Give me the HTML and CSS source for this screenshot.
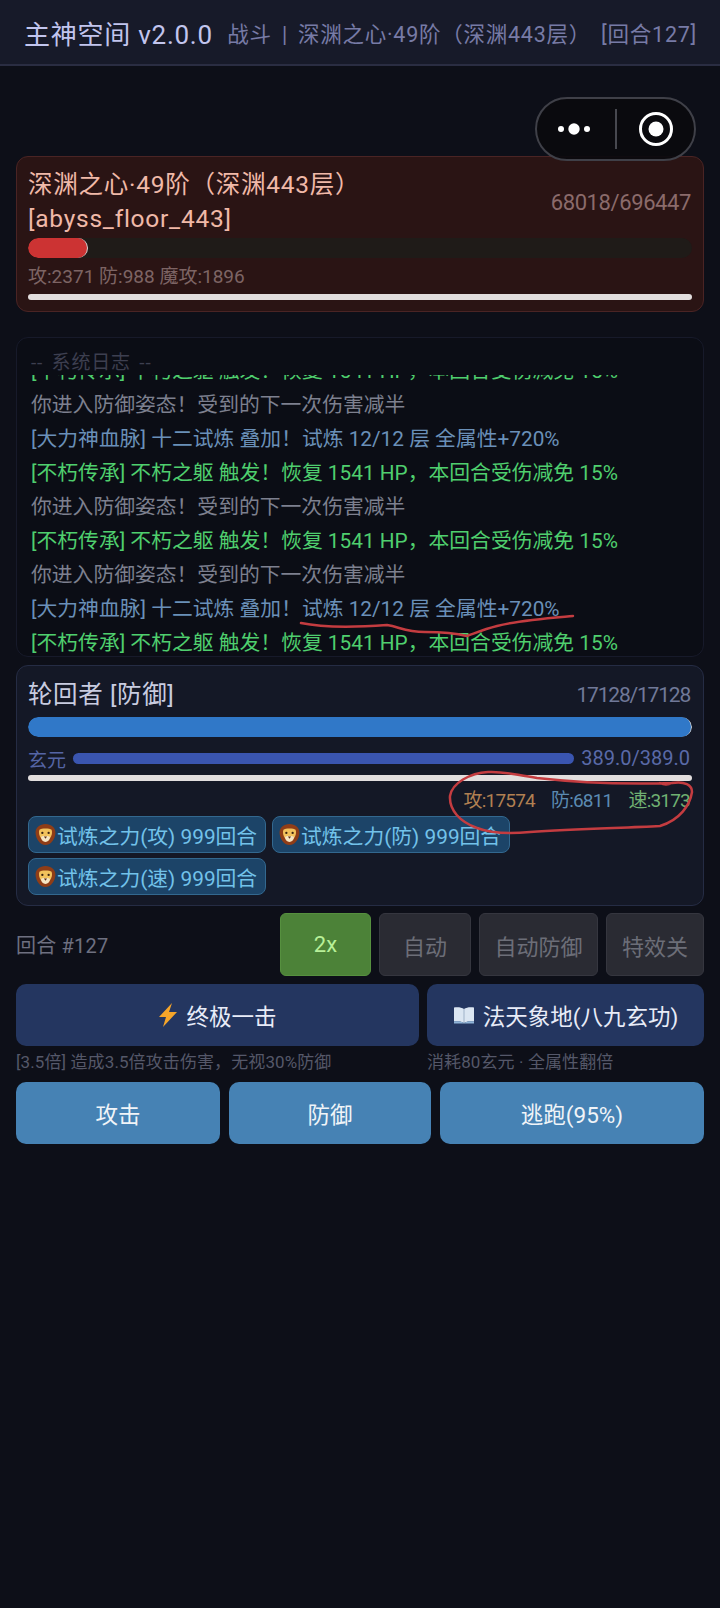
FILE: index.html
```html
<!DOCTYPE html>
<html lang="zh-CN">
<head>
  <meta charset="UTF-8" />
  <meta name="viewport" content="width=device-width, initial-scale=1.0"/>
  <title>主神空间</title>
  <link rel="stylesheet" href="styles.css">
</head>
<body>
  <svg class="icon-defs" width="0" height="0">
    <symbol id="lion" viewBox="0 0 20 22">
      <path d="M10 1C4.500 1 .3 4.600 .5 9.500c.2 5.200 4.100 11.500 9.500 11.500s9.300-6.300 9.500-11.500C19.700 4.600 15.500 1 10 1z" fill="#8f3d17"/>
      <path d="M4.200 6.500C6 4.800 14 4.800 15.800 6.500c1 2.500.3 6-1.800 8.500H6C3.900 12.500 3.200 9 4.200 6.500z" fill="#f3c25c"/>
      <path d="M5.800 13.500c1-1.300 7.400-1.300 8.400 0 .3 2.500-2 4.700-4.200 4.700s-4.500-2.200-4.200-4.700z" fill="#f6e6c4"/>
      <circle cx="7" cy="9.500" r="1.100" fill="#3a2210"/>
      <circle cx="13" cy="9.500" r="1.100" fill="#3a2210"/>
      <path d="M8.500 13h3L10 15z" fill="#5a2a12"/>
    </symbol>
  </svg>

  <header class="topbar">
    <span class="app-title">主神空间 v2.0.0</span>
    <span class="app-status">战斗 | 深渊之心·49阶（深渊443层） [回合127]</span>
  </header>

  <div class="capsule">
    <svg class="capsule-dots" width="36" height="14" viewBox="0 0 36 14">
      <circle cx="5" cy="7" r="3" fill="#fff"/>
      <circle cx="18" cy="7" r="5.700" fill="#fff"/>
      <circle cx="31" cy="7" r="3" fill="#fff"/>
    </svg>
    <span class="capsule-line"></span>
    <svg class="capsule-target" width="34" height="34" viewBox="0 0 34 34">
      <circle cx="17" cy="17" r="15.500" fill="none" stroke="#fff" stroke-width="3"/>
      <circle cx="17" cy="17" r="7.500" fill="#fff"/>
    </svg>
  </div>

  <main class="battle">
    <section class="card boss-card">
      <div class="card-head">
        <div class="boss-name">深渊之心·49阶（深渊443层）<br>[abyss_floor_443]</div>
        <div class="boss-hp">68018/696447</div>
      </div>
      <div class="bar boss-bar"><div class="bar-fill boss-fill" style="width: 9.1%"></div></div>
      <div class="boss-stats">攻:2371 防:988 魔攻:1896</div>
      <div class="white-bar"></div>
    </section>

    <section class="log">
      <div class="log-title">-- 系统日志 --</div>
      <div class="log-body">
        <div class="log-line green">[不朽传承] 不朽之躯 触发！恢复 1541 HP，本回合受伤减免 15%</div>
        <div class="log-line grey">你进入防御姿态！受到的下一次伤害减半</div>
        <div class="log-line blue">[大力神血脉] 十二试炼 叠加！试炼 12/12 层 全属性+720%</div>
        <div class="log-line green">[不朽传承] 不朽之躯 触发！恢复 1541 HP，本回合受伤减免 15%</div>
        <div class="log-line grey">你进入防御姿态！受到的下一次伤害减半</div>
        <div class="log-line green">[不朽传承] 不朽之躯 触发！恢复 1541 HP，本回合受伤减免 15%</div>
        <div class="log-line grey">你进入防御姿态！受到的下一次伤害减半</div>
        <div class="log-line blue">[大力神血脉] 十二试炼 叠加！试炼 12/12 层 全属性+720%</div>
        <div class="log-line green">[不朽传承] 不朽之躯 触发！恢复 1541 HP，本回合受伤减免 15%</div>
      </div>
    </section>

    <section class="card player-card">
      <div class="card-head">
        <div class="player-name">轮回者 [防御]</div>
        <div class="player-hp">17128/17128</div>
      </div>
      <div class="bar player-bar"><div class="bar-fill player-fill" style="width: 100%"></div></div>
      <div class="mana-row">
        <span class="mana-label">玄元</span>
        <div class="mana-bar"></div>
        <span class="mana-value">389.0/389.0</span>
      </div>
      <div class="white-bar"></div>
      <div class="player-stats">
        <span class="stat-atk">攻:17574</span>
        <span class="stat-def">防:6811</span>
        <span class="stat-spd">速:3173</span>
      </div>
      <div class="buffs">
        <span class="buff"><svg class="buff-icon" width="21" height="23"><use href="#lion"/></svg>试炼之力(攻) 999回合</span>
        <span class="buff"><svg class="buff-icon" width="21" height="23"><use href="#lion"/></svg>试炼之力(防) 999回合</span>
        <span class="buff"><svg class="buff-icon" width="21" height="23"><use href="#lion"/></svg>试炼之力(速) 999回合</span>
      </div>
    </section>

    <div class="controls">
      <span class="turn">回合 #127</span>
      <button class="toggle toggle-on toggle-speed">2x</button>
      <button class="toggle toggle-auto">自动</button>
      <button class="toggle toggle-guard">自动防御</button>
      <button class="toggle toggle-fx">特效关</button>
    </div>

    <div class="skills">
      <div class="skill">
        <button class="skill-btn">
          <svg width="20" height="24" viewBox="0 0 20 24"><path d="M14 0L1 14h7l-3 10L19 9h-8z" fill="#f5a52a"/></svg>
          终极一击
        </button>
        <p class="skill-desc">[3.5倍] 造成3.5倍攻击伤害，无视30%防御</p>
      </div>
      <div class="skill">
        <button class="skill-btn">
          <svg width="22" height="18" viewBox="0 0 22 18">
            <path d="M11 3C8.500 1 4 1 1 1.500V15.500C4 15 8.500 15 11 17 13.500 15 18 15 21 15.500V1.500C18 1 13.500 1 11 3z" fill="#dbe6f2"/>
            <path d="M11 3V17" stroke="#9fb2c8" stroke-width="1"/>
            <path d="M1 15.500C4 15 8.500 15 11 17 13.500 15 18 15 21 15.500V17.500H1z" fill="#8fb4d8"/>
          </svg>
          法天象地(八九玄功)
        </button>
        <p class="skill-desc">消耗80玄元 · 全属性翻倍</p>
      </div>
    </div>

    <div class="actions">
      <button class="action-btn">攻击</button>
      <button class="action-btn">防御</button>
      <button class="action-btn">逃跑(95%)</button>
    </div>
  </main>

  <!-- red pen marks drawn over the screenshot -->
  <svg class="pen-marks" width="720" height="1608" viewBox="0 0 720 1608">
    <path d="M301 623C320 627 345 628 387 625C400 627 405 632 425 632C440 632 455 633 467 636C478 632 485 629 497 626C520 620 550 618 573 616"/>
    <path d="M673 783C640 784 590 784 537 778C515 775 505 771 488 772C470 773 452 783 450 796C449 810 460 822 477 828C490 833 510 834 530 832C575 829 620 828 660 826C680 820 690 805 692 792C692 785 685 781 672 783C668 785 664 785 660 783"/>
  </svg>
</body>
</html>
```

FILE: styles.css
```css
* { margin: 0; padding: 0; box-sizing: border-box; }
body {
  position: relative;
  width: 720px;
  height: 1608px;
  overflow: hidden;
  background: #0d0f18;
  font-family: "Roboto", "Noto Sans CJK SC", sans-serif;
}
button { font-family: inherit; border: none; }
.icon-defs { position: absolute; }

.topbar {
  display: flex;
  align-items: center;
  justify-content: space-between;
  height: 66px;
  padding: 0 23px 0 24px;
  background: #171a29;
  border-bottom: 2px solid #2a2d42;
  white-space: nowrap;
}
.app-title { font-size: 26px; letter-spacing: 0.75px; color: #c2c5ee; }
.app-status { font-size: 21.500px; letter-spacing: 0.75px; word-spacing: 4px; color: #777ba6; }

.capsule {
  position: absolute;
  top: 97px;
  left: 535px;
  z-index: 2;
  display: flex;
  align-items: center;
  width: 161px;
  height: 64px;
  border: 2px solid #3f4048;
  border-radius: 32px;
  background: rgba(10, 10, 14, 0.92);
}
.capsule-dots { margin-left: 19px; }
.capsule-line { width: 2px; height: 40px; margin-left: 23px; background: #47484f; }
.capsule-target { margin-left: 22px; }

.battle { padding: 90px 16px 0; }

.card { border-radius: 12px; border: 1px solid; }
.card-head { display: flex; align-items: center; justify-content: space-between; }
.bar { height: 20px; border-radius: 10px; overflow: hidden; }
.bar-fill { height: 100%; border-radius: 10px; border-right: 1px solid #d8d8d8; }
.white-bar { height: 6px; border-radius: 3px; background: #e2dede; }

.boss-card {
  padding: 11px;
  height: 156px;
  background: #2a1414;
  border-color: #4a2424;
}
.boss-card .card-head { padding-right: 1px; }
.boss-name { font-size: 24.500px; letter-spacing: 0.75px; line-height: 34px; color: #f0b9a8; }
.boss-hp { font-size: 22px; letter-spacing: -0.4px; color: #8b6b6b; }
.boss-bar { margin-top: 2px; background: #1f1b18; }
.boss-fill { background: #cc3333; }
.boss-stats { margin-top: 6px; font-size: 19px; line-height: 26px; color: #7d6464; }
.boss-card .white-bar { margin-top: 4px; }

.log {
  height: 320px;
  margin-top: 25px;
  border: 1px solid #171a2a;
  border-radius: 12px;
  background: #0b0d15;
  overflow: hidden;
}
.log-title {
  height: 37px;
  padding: 13px 14px 0;
  font-size: 19px;
  line-height: 24px;
  letter-spacing: 0.8px;
  word-spacing: 3px;
  color: #3d3f50;
}
.log-body {
  display: flex;
  flex-direction: column;
  justify-content: flex-end;
  height: 285px;
  padding-left: 14px;
  overflow: hidden;
}
.log-line { flex: none; font-size: 20.800px; line-height: 34px; white-space: nowrap; }
.green { color: #4fcf6e; }
.grey { color: #7d808f; }
.blue { color: #6a90b8; }

.player-card {
  margin-top: 8px;
  padding: 11px 11px 10px;
  background: #141826;
  border-color: #252c44;
}
.player-card .card-head { padding-right: 2px; }
.player-name { font-size: 24.500px; letter-spacing: 0.6px; line-height: 36px; color: #c8cce0; }
.player-hp { font-size: 21px; letter-spacing: -1.2px; color: #707898; }
.player-bar { margin-top: 4px; }
.player-fill { background: #3078c8; }
.mana-row { display: flex; align-items: center; height: 30px; margin-top: 6px; padding-right: 2px; }
.mana-label { font-size: 19px; color: #5565a5; }
.mana-bar { flex: 1; height: 11px; margin: 0 7px 0 7px; border-radius: 6px; background: #3a55b0; }
.mana-value { font-size: 20px; color: #5a6aa8; }
.player-card .white-bar { margin-top: 2px; }
.player-stats {
  display: flex;
  justify-content: flex-end;
  gap: 16px;
  margin-top: 7px;
  padding-right: 2px;
  font-size: 19px;
  letter-spacing: -0.8px;
  line-height: 26px;
}
.stat-atk { color: #b08052; }
.stat-def { color: #5b8ab2; }
.stat-spd { color: #70b072; }

.buffs { display: flex; flex-wrap: wrap; gap: 5px 6px; margin-top: 2px; }
.buff {
  display: flex;
  align-items: center;
  gap: 1px;
  width: 238px;
  height: 37px;
  padding-left: 6px;
  border: 1px solid #33688f;
  border-radius: 8px;
  background: #1c4468;
  font-size: 20.800px;
  color: #72c2ea;
  white-space: nowrap;
}

.controls { display: flex; align-items: center; gap: 8px; margin-top: 7px; }
.turn { flex: 1; font-size: 20px; letter-spacing: 0.2px; color: #6e7080; }
.toggle {
  height: 63px;
  border: 1px solid #35363f;
  border-radius: 6px;
  background: #2a2b33;
  font-size: 22px;
  color: #6c6e78;
}
.toggle-speed { width: 91px; }
.toggle-auto { width: 92px; }
.toggle-guard { width: 119px; }
.toggle-fx { width: 98px; }
.toggle-on { background: #4c8238; border-color: #56903f; color: #b8f098; }

.skills { display: grid; grid-template-columns: 403px 1fr; gap: 8px; margin-top: 8px; }
.skill-btn {
  display: flex;
  align-items: center;
  justify-content: center;
  gap: 8px;
  width: 100%;
  height: 62px;
  border-radius: 10px;
  background: #243660;
  font-size: 22.500px;
  color: #e8ecf8;
}
.skill-desc { margin-top: 5px; font-size: 17px; line-height: 22px; letter-spacing: 0.1px; color: #555869; }

.actions { display: grid; grid-template-columns: 204px 202px 1fr; gap: 9px; margin-top: 9px; }
.action-btn {
  height: 62px;
  border-radius: 10px;
  background: #4682b4;
  font-size: 22.500px;
  color: #f0f4f8;
}

.pen-marks {
  position: absolute;
  top: 0;
  left: 0;
  z-index: 3;
  pointer-events: none;
  fill: none;
  stroke: #c43c40;
  stroke-width: 2.500;
  stroke-linecap: round;
}
```
